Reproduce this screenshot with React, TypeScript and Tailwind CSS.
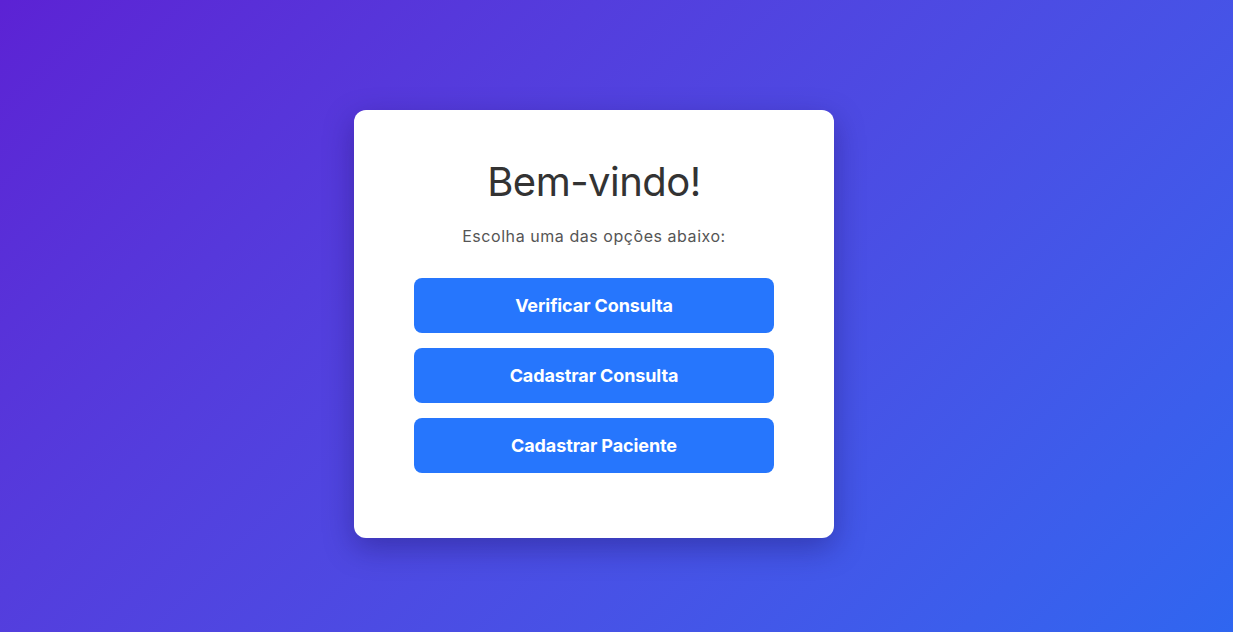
export default function App() {
  const options = ["Verificar Consulta", "Cadastrar Consulta", "Cadastrar Paciente"];

  return (
    <div className="h-[632px] w-full bg-linear-135 from-[#5c22d4] to-[#2f66f0] flex items-center justify-center pr-[45px] pt-[16px] font-['Inter','Open_Sans',sans-serif]">
      {/* Card */}
      <div className="w-[480px] h-[428px] bg-white rounded-xl shadow-[0_10px_30px_rgba(20,10,80,0.35)] px-[60px] pt-[42px] text-center">
        <h1 className="text-[40px] leading-[60px] font-normal text-[#333333] tracking-[-0.5px]">
          Bem-vindo!
        </h1>
        <p className="mt-[12px] text-[16px] leading-[24px] text-[#555555] tracking-[0.55px]">
          Escolha uma das opções abaixo:
        </p>

        {/* Buttons */}
        <div className="mt-[30px] flex flex-col gap-[15px]">
          {options.map((label) => (
            <button
              key={label}
              className="h-[55px] w-full rounded-lg bg-[#2676fd] text-white text-[18px] font-bold tracking-[-0.1px] hover:bg-[#1f63dd] transition"
            >
              {label}
            </button>
          ))}
        </div>
      </div>
    </div>
  );
}
